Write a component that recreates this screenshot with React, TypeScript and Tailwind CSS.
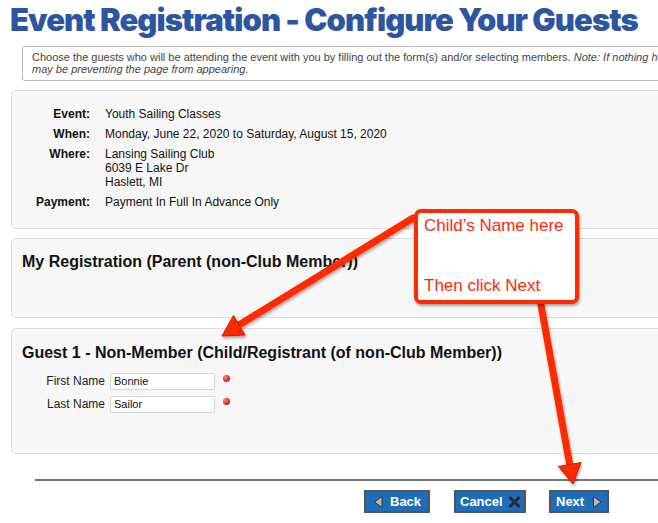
import React from 'react';

function Dot() {
  return (
    <span className="ml-[8px] mt-[2px] inline-block h-[7px] w-[7px] self-start rounded-full bg-[radial-gradient(circle_at_35%_35%,#ff8a80_0%,#e53935_45%,#a01010_100%)]" />
  );
}

function Field({ label, value }: { label: string; value: string }) {
  return (
    <div className="flex items-start">
      <span className="w-[82px] pt-[1px] text-right text-[12px] leading-[14px] text-[#222]">{label}</span>
      <div className="ml-[5px] h-[17px] w-[105px] rounded-[2px] border border-[#d6d6d6] bg-white pl-[3px] text-[11px] leading-[15px] text-[#111]">
        {value}
      </div>
      <Dot />
    </div>
  );
}

function Arrows() {
  return (
    <svg className="pointer-events-none absolute left-0 top-0" width="658" height="523">
      <defs>
        <filter id="sh" x="-20%" y="-20%" width="140%" height="140%">
          <feDropShadow dx="1" dy="2" stdDeviation="1.5" floodColor="#000" floodOpacity="0.35" />
        </filter>
      </defs>
      <g filter="url(#sh)" fill="#ff2a00" stroke="#c41c00" strokeWidth="1">
        <line x1="413" y1="218" x2="238" y2="325.6" stroke="#ff2a00" strokeWidth="7" strokeLinecap="round" />
        <polygon points="222,336 245,335 233.5,315.5" strokeLinejoin="round" />
        <line x1="541" y1="305" x2="569.8" y2="465.3" stroke="#ff2a00" strokeWidth="7" strokeLinecap="round" />
        <polygon points="573,484 581,462.5 558.5,466.5" strokeLinejoin="round" />
      </g>
    </svg>
  );
}

export default function App() {
  return (
    <div className="relative h-[523px] w-[658px] overflow-hidden bg-white font-['Liberation_Sans',Arial,sans-serif]">
      {/* header */}
      <h1 className="h-[46px] whitespace-nowrap pl-[10px] font-['Inter',sans-serif] text-[31px] font-black leading-[40px] tracking-[-0.03em] text-[#2e55a1]">
        Event Registration - Configure Your Guests
      </h1>

      <div className="ml-[22px] w-[700px] whitespace-nowrap rounded-[3px] border border-[#bdbdbd] px-[9px] pb-[5px] pt-[4px] text-[11px] leading-[12px] text-[#444]">
        Choose the guests who will be attending the event with you by filling out the form(s) and/or selecting members.{' '}
        <i>Note: If nothing happens when you click Next, a popup blocker</i>
        <br />
        <i>may be preventing the page from appearing.</i>
      </div>

      {/* event info */}
      <div className="ml-[11px] mt-[9px] w-[700px] rounded-[5px] border border-[#dcdcdc] bg-[#f7f7f7] pb-[19px] pt-[16px]">
        <div className="grid grid-cols-[78px_1fr] gap-x-[15px] gap-y-[6px] text-[12px] leading-[14px] text-[#111]">
          <span className="text-right font-bold">Event:</span>
          <span>Youth Sailing Classes</span>
          <span className="text-right font-bold">When:</span>
          <span>Monday, June 22, 2020 to Saturday, August 15, 2020</span>
          <span className="text-right font-bold">Where:</span>
          <span>
            Lansing Sailing Club
            <br />
            6039 E Lake Dr
            <br />
            Haslett, MI
          </span>
          <span className="text-right font-bold">Payment:</span>
          <span>Payment In Full In Advance Only</span>
        </div>
      </div>

      {/* my registration */}
      <div className="ml-[11px] mt-[9px] h-[80px] w-[700px] rounded-[5px] border border-[#dcdcdc] bg-[#f7f7f7] pl-[10px] pt-[14px]">
        <h2 className="text-[16px] font-bold leading-[18px] text-[#111]">My Registration (Parent (non-Club Member))</h2>
      </div>

      {/* guest */}
      <div className="ml-[11px] mt-[10px] h-[126px] w-[700px] rounded-[5px] border border-[#dcdcdc] bg-[#f7f7f7] pl-[10px] pt-[15px]">
        <h2 className="text-[16px] font-bold leading-[18px] text-[#111]">
          Guest 1 - Non-Member (Child/Registrant (of non-Club Member))
        </h2>
        <div className="ml-[1px] mt-[11px] flex flex-col gap-[6px]">
          <Field label="First Name" value="Bonnie" />
          <Field label="Last Name" value="Sailor" />
        </div>
      </div>

      {/* footer */}
      <div className="ml-[35px] mt-[25px] h-[2px] w-[640px] bg-[#777]" />
      <div className="ml-[364px] mt-[9px] flex items-center text-[13px] font-bold leading-[19px] text-white">
        <button className="flex h-[23px] w-[66px] items-center border-2 border-[#555] bg-[#1f6dba] pl-[8px]">
          <svg width="9" height="12" viewBox="0 0 9 12">
            <polygon points="8,0.5 8,11.5 0.5,6" fill="#b8b8b8" stroke="#333" strokeWidth="1" />
          </svg>
          <span className="ml-[7px]">Back</span>
        </button>
        <button className="ml-[24px] flex h-[23px] w-[72px] items-center border-2 border-[#555] bg-[#1f6dba] pl-[4px]">
          <span>Cancel</span>
          <svg className="ml-[5px]" width="13" height="12" viewBox="0 0 13 12">
            <path d="M1.5 1 L11.5 11 M11.5 1 L1.5 11" stroke="#2b2b2b" strokeWidth="3" />
          </svg>
        </button>
        <button className="ml-[23px] flex h-[23px] w-[60px] items-center border-2 border-[#555] bg-[#1f6dba] pl-[5px]">
          <span>Next</span>
          <svg className="ml-[9px]" width="9" height="12" viewBox="0 0 9 12">
            <polygon points="0.5,0.5 0.5,11.5 8,6" fill="#b8b8b8" stroke="#333" strokeWidth="1" />
          </svg>
        </button>
      </div>

      <Arrows />

      {/* callout */}
      <div className="absolute left-[414px] top-[209px] h-[95px] w-[165px] rounded-[7px] border-[4px] border-[#ff2a00] bg-white pl-[6px] pt-[3px] text-[17px] leading-[20px] text-[#ff2a0a] shadow-[1px_2px_3px_rgba(0,0,0,0.35)]">
        <p>Child’s Name here</p>
        <p className="mt-[40px]">Then click Next</p>
      </div>
    </div>
  );
}
